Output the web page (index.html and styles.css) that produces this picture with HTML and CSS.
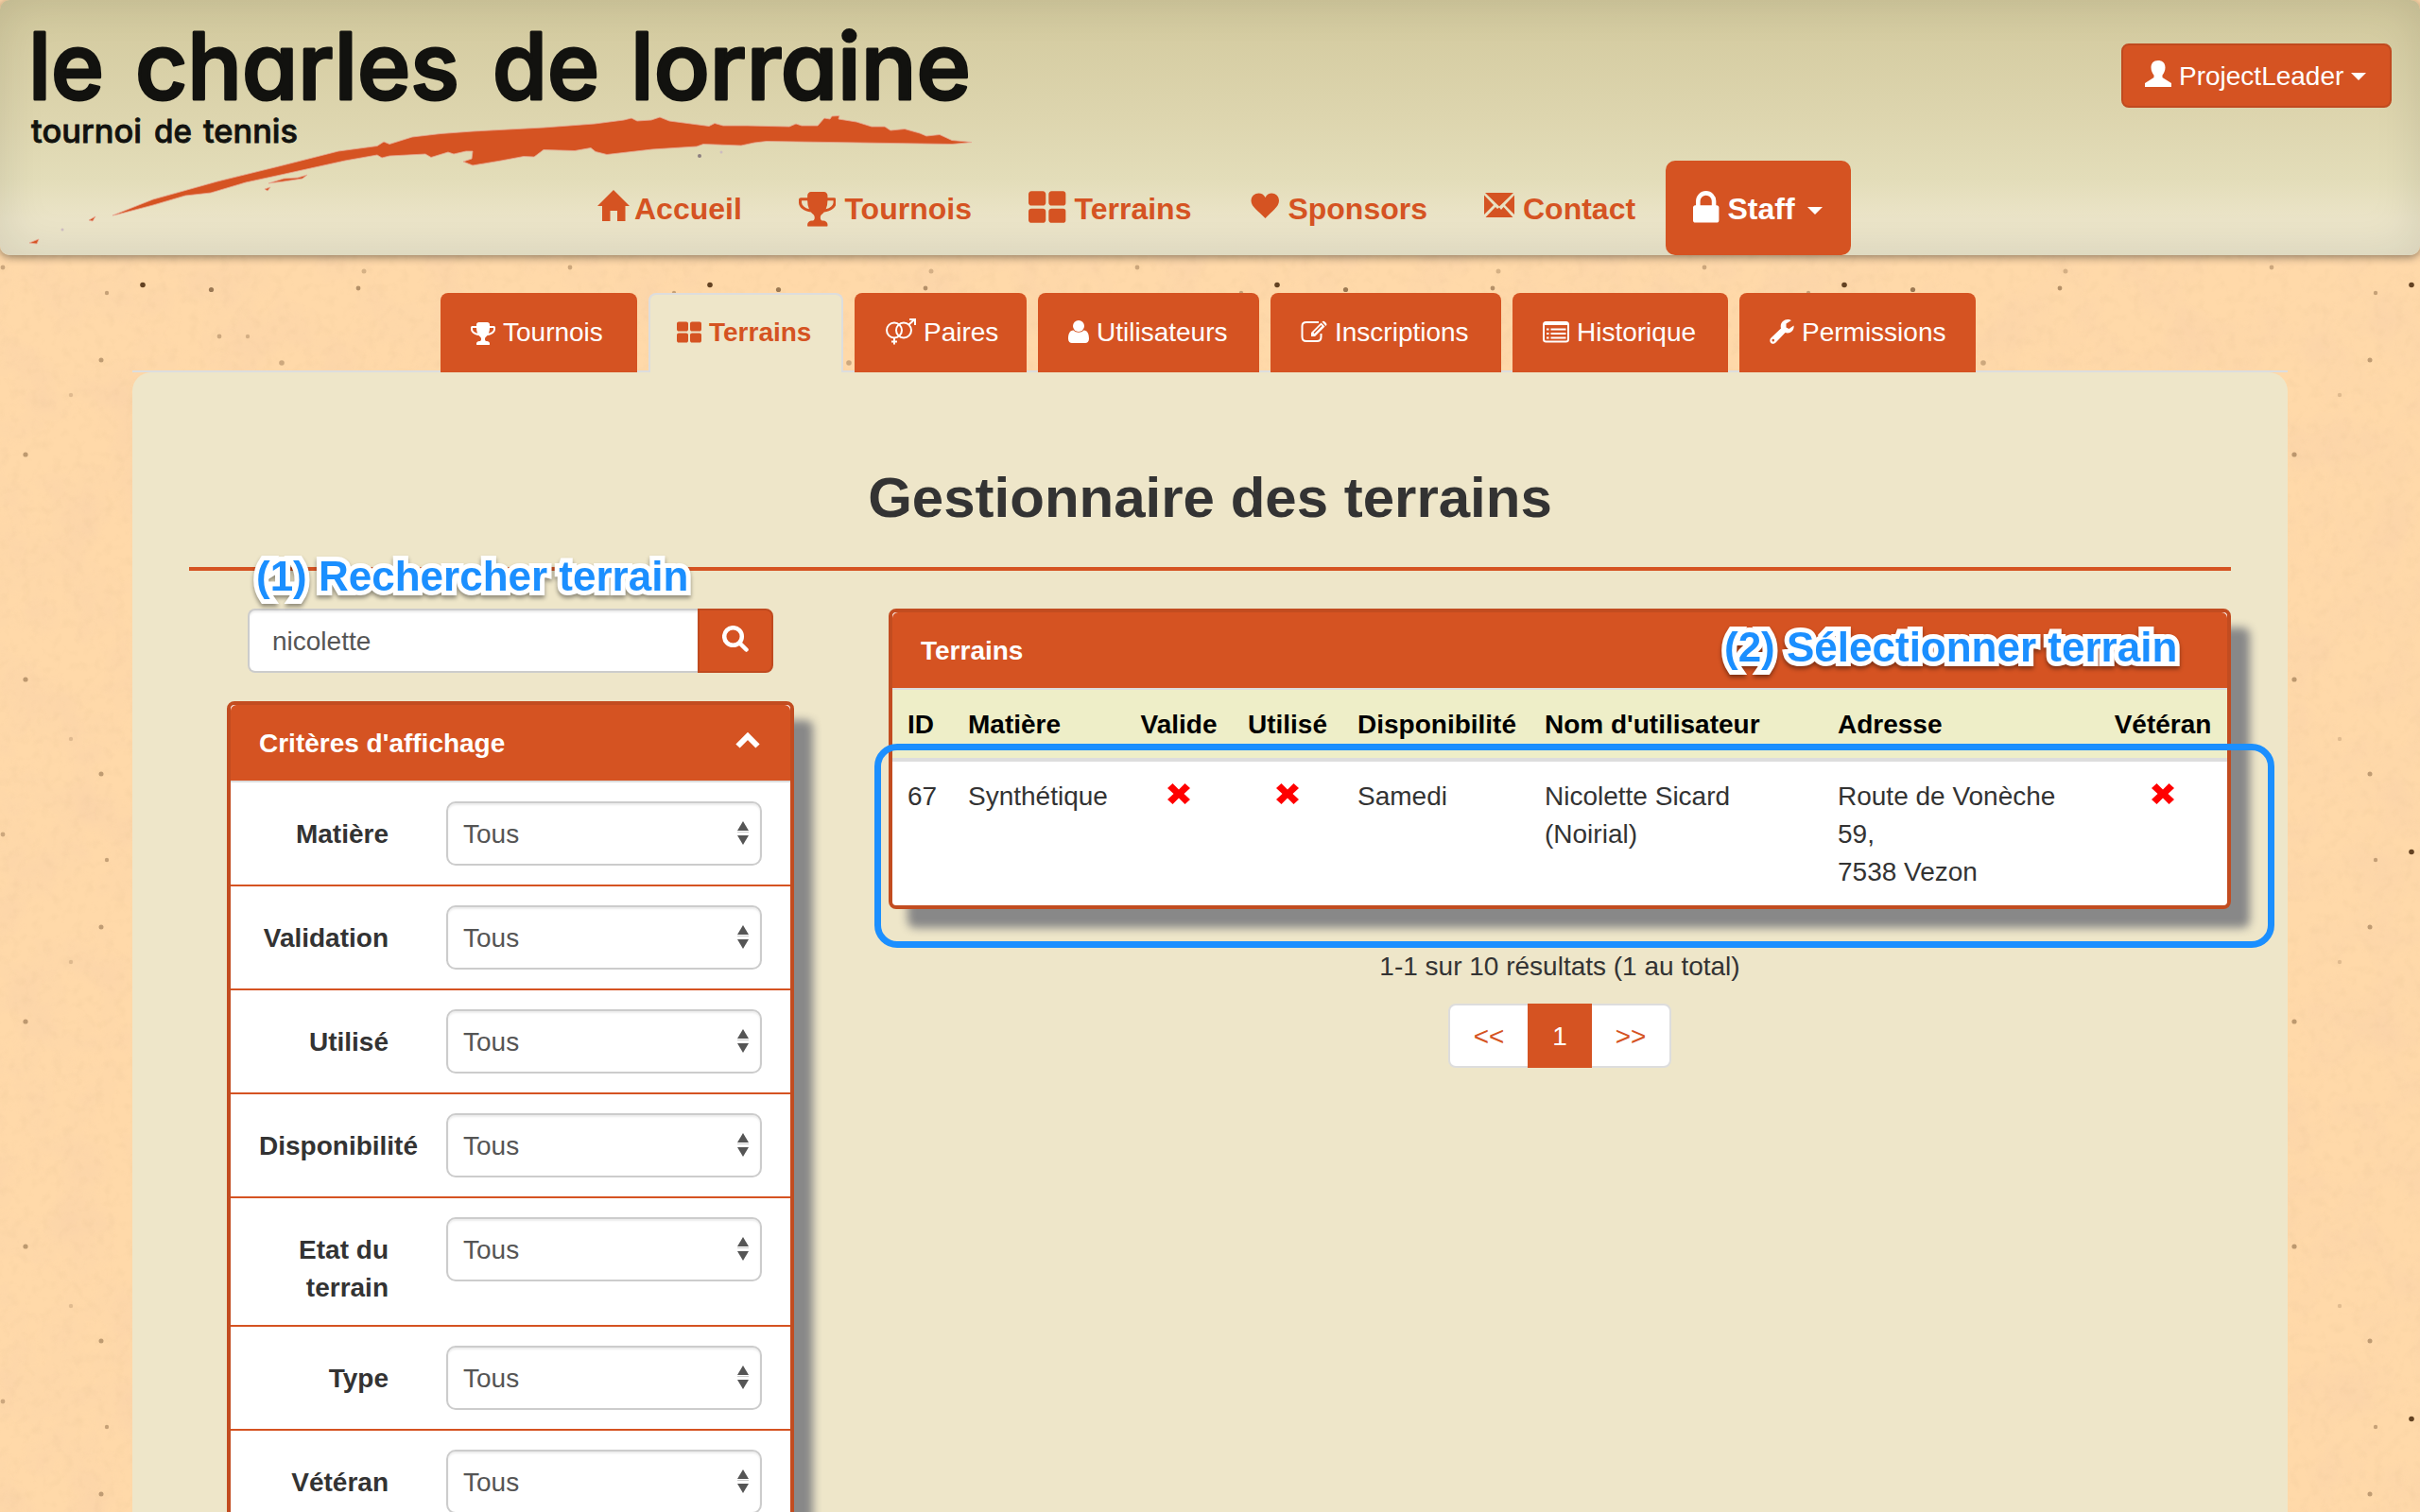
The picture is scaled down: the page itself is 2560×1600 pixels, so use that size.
FILE: index.html
```html
<!DOCTYPE html>
<html lang="fr">
<head>
<meta charset="utf-8">
<title>Gestionnaire des terrains</title>
<link rel="stylesheet" href="styles.css">
</head>
<body>
<svg class="defs" width="0" height="0">
  <symbol id="trophy" viewBox="0 0 1664 1792"><path d="M458 1015q-74-162-74-375H128v96q0 78 94.500 162T458 1015zM1536 736v-96h-256q0 213-74 375 141-33 235.500-117t94.500-162zM1664 608v128q0 71-41.500 143t-112 130-173 97.500T1122 1150q-42 54-95 95-38 34-52.500 72.500T960 1408q0 54 30.500 91t97.500 37q75 0 133.500 45.500T1280 1696v64q0 14-9 23t-23 9H416q-14 0-23-9t-9-23v-64q0-69 58.500-114.500T576 1536q67 0 97.500-37t30.500-91q0-51-14.500-89.500T637 1246q-53-41-95-95-113-5-215.500-44.500t-173-97.500T41.500 879 0 736V608q0-40 28-68t68-28h288v-96q0-66 47-113t113-47h576q66 0 113 47t47 113v96h288q40 0 68 28t28 68z"/></symbol>
  <symbol id="th" viewBox="0 0 1664 1792"><path d="M768 1120v384q0 52-38 90t-90 38H128q-52 0-90-38t-38-90v-384q0-52 38-90t90-38h512q52 0 90 38t38 90zM768 352v384q0 52-38 90t-90 38H128q-52 0-90-38T0 736V352q0-52 38-90t90-38h512q52 0 90 38t38 90zM1664 1120v384q0 52-38 90t-90 38h-512q-52 0-90-38t-38-90v-384q0-52 38-90t90-38h512q52 0 90 38t38 90zM1664 352v384q0 52-38 90t-90 38h-512q-52 0-90-38t-38-90V352q0-52 38-90t90-38h512q52 0 90 38t38 90z"/></symbol>
  <symbol id="cross" viewBox="0 0 24 22"><path d="M5.500 0 12 6.500 18.500 0 24 5 17.500 11 24 17 18.500 22 12 15.500 5.500 22 0 17 6.500 11 0 5z"/></symbol>
</svg>

<svg class="paper" width="2560" height="1600">
  <filter id="blotch" x="0" y="0" width="100%" height="100%">
    <feTurbulence type="fractalNoise" baseFrequency=".018" numOctaves="5" seed="4"/>
    <feColorMatrix values="0 0 0 0 .92  0 0 0 0 .62  0 0 0 0 .4  1.800 0 0 0 -.75"/>
  </filter>
  <filter id="fibre" x="0" y="0" width="100%" height="100%">
    <feTurbulence type="fractalNoise" baseFrequency=".09" numOctaves="2" seed="9"/>
    <feColorMatrix values="0 0 0 0 .8  0 0 0 0 .55  0 0 0 0 .3  2 0 0 0 -1"/>
  </filter>
  <pattern id="specks" width="600" height="600" patternUnits="userSpaceOnUse">
    <g class="speck">
      <circle cx="151" cy="301.500" r="2.800" opacity=".95"/>
      <circle cx="223.500" cy="306.500" r="2.600" opacity=".6"/>
      <circle cx="379" cy="305" r="2.400" opacity=".45"/>
      <circle cx="113" cy="310" r="2.200" opacity=".35"/>
      <circle cx="385" cy="287" r="2.500" opacity=".25"/>
      <circle cx="3" cy="283" r="2.400" opacity=".3"/>
      <circle cx="232" cy="356" r="2.400" opacity=".3"/>
      <circle cx="262" cy="356" r="2.200" opacity=".25"/>
      <circle cx="107" cy="381" r="2.500" opacity=".38"/>
      <circle cx="298" cy="384" r="2.800" opacity=".3"/>
      <circle cx="75" cy="418" r="2.200" opacity=".18"/>
      <circle cx="27" cy="481" r="2.600" opacity=".4"/>
      <circle cx="27" cy="119" r="2.600" opacity=".4"/>
      <circle cx="107" cy="219" r="2.500" opacity=".38"/>
      <circle cx="75" cy="182" r="2.200" opacity=".18"/>
    </g>
  </pattern>
  <rect width="2560" height="1600" filter="url(#blotch)" opacity=".5"/>
  <rect width="2560" height="1600" filter="url(#fibre)" opacity=".25"/>
  <rect width="2560" height="1600" fill="url(#specks)"/>
</svg>

<header class="header">
  <svg class="logo" width="1060" height="270" viewBox="0 0 1060 270">
    <g class="brand">
      <text x="30" y="105" textLength="80" lengthAdjust="spacingAndGlyphs">le</text>
      <text x="143" y="105" textLength="343" lengthAdjust="spacingAndGlyphs">charles</text>
      <text x="521" y="105" textLength="113" lengthAdjust="spacingAndGlyphs">de</text>
      <text x="667" y="105" textLength="360" lengthAdjust="spacingAndGlyphs">lorraine</text>
    </g>
    <g class="tagline">
      <text x="33" y="151" textLength="117" lengthAdjust="spacingAndGlyphs">tournoi</text>
      <text x="163" y="151" textLength="40" lengthAdjust="spacingAndGlyphs">de</text>
      <text x="215" y="151" textLength="100" lengthAdjust="spacingAndGlyphs">tennis</text>
    </g>
    <path class="swoosh" d="M119 228 162 211 205 199 230 192 291 177 358 160 399 154.500 406 150 412 152.500 436 145 466 141.500 500 139 575 135 629 131 660 127 668 125 674 128 689 127 698 124 708 128 750 133.500 756 130.500 765 133 791 133 835 134 842 131 848 133 865 133 872 125 878 126 880 123 888 122.500 887 126 906 129 922 134 936 134 942 138 957 136.500 973 141 980 144 994 142.500 1007 148.500 1028 150.500 1007 152.500 811 149.500 798 151 784 154 744 152.500 737 155 690 158 642 163.500 630 160.500 625 156.500 608 159.500 575 158.500 565 166 554 165.500 530 170 500 175 490 171 499 168 500 160 493 160 480 163 474 161 456 166.500 450 163 412 165 404 167 399 164 365 170 297 185 260 193 223 204 196 207 162 217 124 227z"/>
    <path class="swoosh" d="M284 194 300 189 315 188 325 185 320 189 300 192zM280 200l6-2-3 4zM94 233l7-4-3 5zM31 257l10-4-2 5z"/>
    <circle class="spot" cx="740" cy="165" r="2"/><circle class="spot faint" cx="763" cy="161" r="1.500"/><circle class="spot faint" cx="66" cy="243" r="1.500"/>
  </svg>

  <nav class="nav">
    <a class="home"><svg width="34" height="34" viewBox="0 0 34 34" class="up2"><path d="M17 0 34 17H29.500V33H21V22H13.500V33H5V17H0z"/></svg>Accueil</a>
    <a><svg class="up1" width="39.600" height="42.700"><use href="#trophy"/></svg>Tournois</a>
    <a><svg class="up1" width="39.600" height="42.700"><use href="#th"/></svg>Terrains</a>
    <a class="sponsors"><svg width="32" height="28" viewBox="0 0 32 28" class="up2"><path d="M16.500 27C10 20 1.500 15 1.500 8.500 1.500 0 13 -2.500 16.500 5 20-2.500 31 0 31 8.500 31 15 23 20 16.500 27z"/></svg>Sponsors</a>
    <a><svg width="32" height="27" viewBox="0 0 32 27" class="up2"><path d="M1 0H31L16 14.500zM0 2.500 10 13 0 23zM32 2.500 22 13 32 23zM1.500 26 12 15 14 17 16 15.500 18 18 20.500 15 30.500 26z"/></svg>Contact</a>
    <a class="staff"><svg width="27.400" height="42.700" viewBox="0 0 1152 1792"><path d="M320 768h512V576q0-106-75-181t-181-75-181 75-75 181zM1152 864v576q0 40-28 68t-68 28H96q-40 0-68-28t-28-68V864q0-40 28-68t68-28h32V576q0-184 132-316t316-132 316 132 132 316v192h32q40 0 68 28t28 68z"/></svg>Staff<i class="caret"></i></a>
  </nav>

  <button class="btn user"><svg width="28" height="28" viewBox="0 0 28 28"><path d="M14 0c5 0 7.500 3 7.500 7.500 0 3.500-1.500 6-3 8v2.500L28 24v4H0v-4l9.500-6v-2.500c-1.500-2-3-4.500-3-8C6.500 3 9 0 14 0z"/></svg>ProjectLeader<i class="caret"></i></button>
</header>

<main class="page">
  <nav class="tabs">
    <a class="tab t1"><svg width="26" height="28"><use href="#trophy"/></svg>Tournois</a>
    <a class="tab t2 active"><svg width="26" height="28"><use href="#th"/></svg>Terrains</a>
    <a class="tab t3"><svg width="33" height="28" viewBox="0 0 33 28" class="line"><circle cx="10" cy="12.500" r="8"/><circle cx="20" cy="12.500" r="8"/><path d="M10 20.500V27.500M7 24.500h6M25.500 6.500 31.500.9M26 1h6v6"/></svg>Paires</a>
    <a class="tab t4"><svg width="22" height="24" viewBox="0 0 22 24"><circle cx="11" cy="6" r="6"/><path d="M5.500 10.500c3 3 8 3 11 0 4 0 5.500 4 5.500 9 0 3-2 4.500-4 4.500H4c-2 0-4-1.500-4-4.500 0-5 1.500-9 5.500-9z"/></svg>Utilisateurs</a>
    <a class="tab t5"><svg width="28" height="24" viewBox="0 0 28 24" class="line"><path d="M19 2H6Q1.500 2 1.500 6V17.500Q1.500 22 6 22H17Q21.500 22 21.500 17.500V14"/><path class="solid" d="M11 13 21.500 2.500 25.500 6.500 15 17H11zM22.500 1.500Q24 0 25.500 1.500L27 3Q28 4.500 27 5.500L26.500 6z"/><path class="cut" d="M14 13.500 22 5.500"/></svg>Inscriptions</a>
    <a class="tab t6"><svg width="28" height="24" viewBox="0 0 28 24" class="line"><rect x="1" y="2" width="26" height="20.500" rx="2.500"/><path d="M1 4h26M4 9.500h2.500M8.500 9.500h16M4 14h2.500M8.500 14h16M4 18.500h2.500M8.500 18.500h16"/></svg>Historique</a>
    <a class="tab t7"><svg width="26" height="26" viewBox="0 0 26 26"><path d="M25.500 6.500c1 5-4 9.500-9 7.500L6.500 24.500c-2 2-4.500 1.500-5.500 0s-1-3.500.5-5L12 9.500C10.500 4 15 0 19 0c1.500 0 3 .5 4 1L17.500 4.500v4l3 1.500zM3.700 20.800a1.300 1.300 0 1 0 .1 2.600 1.300 1.300 0 0 0-.1-2.600z"/></svg>Permissions</a>
  </nav>

  <section class="sheet">
    <h1>Gestionnaire des terrains</h1>
    <div class="columns">
      <aside class="side">
        <div class="search"><span class="field">nicolette</span><button class="btn go"><svg width="28" height="28" viewBox="0 0 28 28"><circle cx="11.500" cy="11.500" r="9.300"/><path d="M18.500 18.500 25.500 25.500"/></svg></button></div>
        <div class="panel">
          <div class="head">Critères d'affichage<svg width="26" height="17" viewBox="0 0 26 17"><path d="M2.500 14.500 13 4 23.500 14.500"/></svg></div>
          <div class="row"><label>Matière</label><span class="select">Tous<i></i></span></div>
          <div class="row"><label>Validation</label><span class="select">Tous<i></i></span></div>
          <div class="row"><label>Utilisé</label><span class="select">Tous<i></i></span></div>
          <div class="row"><label>Disponibilité</label><span class="select">Tous<i></i></span></div>
          <div class="row"><label>Etat du terrain</label><span class="select">Tous<i></i></span></div>
          <div class="row"><label>Type</label><span class="select">Tous<i></i></span></div>
          <div class="row"><label>Vétéran</label><span class="select">Tous<i></i></span></div>
        </div>
      </aside>
      <div class="content">
        <div class="panel">
          <div class="head">Terrains</div>
          <table>
            <colgroup><col class="c1"><col class="c2"><col class="c3"><col class="c4"><col class="c5"><col class="c6"><col class="c7"><col class="c8"></colgroup>
            <thead><tr><th>ID</th><th>Matière</th><th class="mid">Valide</th><th class="mid">Utilisé</th><th>Disponibilité</th><th>Nom d'utilisateur</th><th>Adresse</th><th class="mid">Vétéran</th></tr></thead>
            <tbody><tr><td>67</td><td>Synthétique</td><td class="mid"><svg class="no"><use href="#cross"/></svg></td><td class="mid"><svg class="no"><use href="#cross"/></svg></td><td>Samedi</td><td>Nicolette Sicard<br>(Noirial)</td><td>Route de Vonèche<br>59,<br>7538 Vezon</td><td class="mid"><svg class="no"><use href="#cross"/></svg></td></tr></tbody>
          </table>
        </div>
        <p class="count">1-1 sur 10 résultats (1 au total)</p>
        <div class="pager"><a>&lt;&lt;</a><a class="current">1</a><a>&gt;&gt;</a></div>
      </div>
    </div>
  </section>
</main>

<div class="note n1">(1) Rechercher terrain</div>
<div class="note n2">(2) Sélectionner terrain</div>
<div class="frame"></div>
</body>
</html>
```

FILE: styles.css
```css
* { box-sizing: border-box; }
html, body { height: 1600px; overflow: hidden; }
body {
  margin: 0;
  position: relative;
  font: 28px/40px "Liberation Sans", Arial, sans-serif;
  color: #333;
  background-color: #ffd9a9;
}
svg { fill: currentColor; display: block; flex: none; }
.defs, .paper { position: absolute; top: 0; left: 0; }
.paper { z-index: -1; }
.speck { fill: #5a3a1a; }

.header {
  position: relative;
  height: 270px;
  border-radius: 10px;
  background: linear-gradient(#d2c99d, #ddd5ae 45%, #e3ddb9 70%, #ebe4c8 86%, #ebe5cb);
  box-shadow: inset 0 0 50px rgba(0, 0, 0, .1), 0 2px 10px rgba(0, 0, 0, .45);
}
.logo { position: absolute; left: 0; top: 0; }
.brand { font: 500 98px Inter, sans-serif; font-feature-settings: "cv11"; fill: #12120f; stroke: #12120f; stroke-width: 3; stroke-linejoin: round; }
.tagline { font: 500 34px Inter, sans-serif; font-feature-settings: "cv11"; fill: #12120f; stroke: #12120f; stroke-width: .8; }
.swoosh { fill: #d55322; stroke: #e9a995; stroke-width: .8; }
.spot { fill: #8b7f80; }
.faint { fill: #cdbcc0; }

.nav { position: absolute; left: 602px; top: 170px; display: flex; height: 100px; color: #d55322; font-size: 32px; font-weight: bold; }
.nav a { display: flex; align-items: center; gap: 9px; padding: 1px 30px 0; }
.nav a.home { gap: 5px; }
.nav svg { position: relative; }
.nav .up1 { top: -2px; }
.nav .up2 { top: -3px; }
.nav .sponsors { gap: 8px; padding-left: 32px; }
.nav a.staff { background: #d55322; color: #fff; border-radius: 10px; width: 196px; padding: 1px 0 0 29px; margin-left: 2px; }
.caret { border: 8px solid transparent; border-top-color: currentColor; border-bottom: 0; margin-left: 4px; }
.nav .caret { margin-top: 4px; }

.btn { background: #d55322; border: 2px solid #c04a1f; color: #fff; font: inherit; border-radius: 8px; }
.user { position: absolute; right: 30px; top: 46px; width: 286px; height: 68px; padding: 2px 0 0 23px; display: flex; align-items: center; gap: 8px; }
.user svg { margin-top: -6px; }
.user .caret { margin-left: 0; }

.page { width: 2280px; margin: 40px auto 0; }
.tabs { display: flex; gap: 12px; padding-left: 326px; height: 84px; border-bottom: 2px solid #ddd; }
.tab { display: flex; align-items: center; gap: 8px; height: 84px; padding-left: 32px; background: #d55322; color: #fff; border-radius: 8px 8px 0 0; white-space: nowrap; }
.tab svg { position: relative; top: -1px; }
.t1 { width: 208px; }
.t2 { width: 206px; }
.t3 { width: 182px; }
.t4 { width: 234px; }
.t5 { width: 244px; }
.t6 { width: 228px; }
.t7 { width: 250px; }
.tab.active { background: #eee6c9; color: #d55322; border: 2px solid #ddd; border-bottom: 0; padding: 0 0 2px 28px; font-weight: bold; }
.line { fill: none; stroke: currentColor; stroke-width: 2; }
.line .solid { fill: currentColor; stroke: none; }
.line .cut { stroke: #d55322; stroke-width: 1.500; }

.sheet {
  height: 1206px;
  overflow: hidden;
  padding: 0 60px;
  background: #eee6c9;
  border-radius: 20px 20px 0 0;
}
h1 { margin: 0; padding-top: 101px; height: 210px; border-bottom: 4px solid #d55322; font-size: 60px; line-height: 64px; text-align: center; }
.columns { display: flex; justify-content: space-between; padding: 40px 0 0 40px; }
.side { width: 600px; }
.content { width: 1420px; }

.search { display: flex; width: 556px; margin: 0 22px 30px; height: 68px; }
.field { flex: 1; padding: 13px 24px 11px; background: #fff; color: #555; border: 2px solid #ccc; border-right: 0; border-radius: 8px 0 0 8px; box-shadow: inset 0 2px 2px rgba(0, 0, 0, .075); }
.go { width: 80px; border-radius: 0 8px 8px 0; padding: 0 24px 4px; }
.go svg { fill: none; stroke: currentColor; stroke-width: 4.500; stroke-linecap: round; }

.panel { border: 4px solid #c24c20; border-radius: 8px; background: #fff; box-shadow: 20px 20px 10px #888; }
.head { height: 82px; border-bottom: 2px solid #ddd; border-radius: 6px 6px 0 0; padding: 2px 32px 0 30px; display: flex; align-items: center; justify-content: space-between; background: #d55322; color: #fff; font-weight: bold; }
.head svg { fill: none; stroke: currentColor; stroke-width: 6; margin-top: -8px; }
.row { display: flex; gap: 61px; padding: 20px 0 20px 30px; border-bottom: 2px solid #d55322; }
.row label { width: 137px; padding-top: 15px; margin-bottom: -1px; text-align: right; font-weight: bold; }
.select { position: relative; width: 334px; height: 68px; padding: 13px 16px 11px; color: #555; background: #fff; border: 2px solid #ccc; border-radius: 10px; box-shadow: inset 0 2px 2px rgba(0, 0, 0, .075); }
.select::before, .select::after { content: ""; position: absolute; right: 12px; border: 6px solid transparent; }
.select::before { top: 19px; border-top: 0; border-bottom: 10px solid #555; }
.select::after { top: 34px; border-bottom: 0; border-top: 10px solid #555; }
.select i { position: absolute; right: 12px; top: 30px; width: 12px; height: 1px; background: #ccc; }

table { width: 100%; table-layout: fixed; border-collapse: separate; border-spacing: 0; }
th, td { padding: 17px 0 15px 16px; text-align: left; vertical-align: top; white-space: nowrap; }
th { background: #eeeec8; color: #000; border-bottom: 4px solid #ddd; }
th.mid, td.mid { padding-left: 0; padding-right: 0; text-align: center; }
.c1 { width: 64px; }
.c2 { width: 182px; }
.c3 { width: 114px; }
.c4 { width: 116px; }
.c5 { width: 198px; }
.c6 { width: 310px; }
.c7 { width: 292px; }
.c8 { width: 136px; }
.no { width: 24px; height: 22px; margin: 6px auto 0; color: #f00; }

.count { margin: 41px 0 19px; text-align: center; }
.pager { display: flex; width: 236px; margin: 0 auto; height: 68px; background: #fff; border: 2px solid #ddd; border-radius: 8px; color: #d55322; line-height: 66px; text-align: center; }
.pager a { flex: 1; }
.pager .current { flex: 0 0 68px; height: 68px; margin: -2px 0; background: #d55322; color: #fff; line-height: 70px; }

.note { position: absolute; font-size: 44px; line-height: 50px; font-weight: bold; color: #1b8fff; -webkit-text-stroke: 10px #fff; paint-order: stroke fill; white-space: nowrap; filter: drop-shadow(0 3px 2px rgba(0, 0, 0, .4)); }
.n1 { left: 271px; top: 585px; }
.n2 { left: 1824px; top: 660px; }
.frame { position: absolute; left: 925px; top: 787px; width: 1481px; height: 216px; border: 7px solid #1b8fff; border-radius: 24px; }
```
